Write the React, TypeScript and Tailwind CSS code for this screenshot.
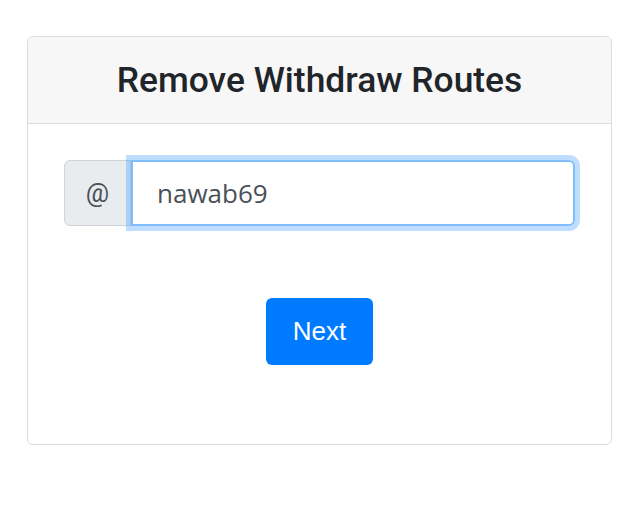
export default function App() {
  return (
    <div className="min-h-[529px] w-full bg-white pl-[27px] pt-[36px]">
      <div className="w-[585px] h-[409px] rounded-[6px] border border-[#dcdcdc] overflow-hidden flex flex-col">
        <div className="h-[87px] bg-[#f7f7f7] border-b border-[#dcdcdc] flex items-center justify-center">
          <h1 className="text-[35.4px] font-medium text-[#212529] font-['Roboto',sans-serif] leading-none pt-[2px]">
            Remove Withdraw Routes
          </h1>
        </div>
        <div className="flex-1 px-[36px] pt-[36px] flex flex-col items-center">
          <div className="flex w-full h-[66px]">
            <div className="w-[67px] shrink-0 flex items-center justify-center bg-[#e9ecef] border border-[#ced4da] rounded-l-[6px] text-[26px] text-[#495057] font-['Roboto',sans-serif]">
              @
            </div>
            <input
              defaultValue="nawab69"
              className="flex-1 min-w-0 h-full border-2 border-[#80bdff] rounded-r-[6px] px-[24px] text-[26px] text-[#495057] font-['Open_Sans',sans-serif] outline-none shadow-[0_0_0_5px_rgba(0,123,255,0.25)]"
            />
          </div>
          <button className="mt-[72px] w-[107px] h-[67px] rounded-[6px] bg-[#007bff] text-white text-[26px] font-['Liberation_Sans',sans-serif]">
            Next
          </button>
        </div>
      </div>
    </div>
  );
}
